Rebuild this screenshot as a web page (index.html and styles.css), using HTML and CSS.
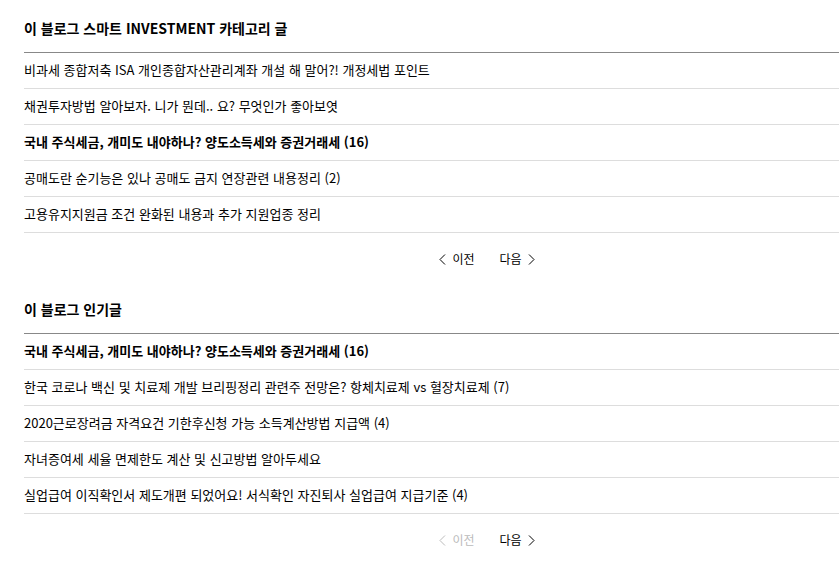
FILE: index.html
```html
<!DOCTYPE html>
<html lang="ko">
<head>
<meta charset="utf-8">
<title>블로그 글 목록</title>
<link rel="stylesheet" href="styles.css">
</head>
<body>
<div class="page">
  <section class="section">
    <h2 class="heading">이 블로그 스마트 INVESTMENT 카테고리 글</h2>
    <ul class="list">
      <li class="item">비과세 종합저축 ISA 개인종합자산관리계좌 개설 해 말어?! 개정세법 포인트</li>
      <li class="item">채권투자방법 알아보자. 니가 뭔데.. 요? 무엇인가 좋아보엿</li>
      <li class="item current">국내 주식세금, 개미도 내야하나? 양도소득세와 증권거래세 (16)</li>
      <li class="item">공매도란 순기능은 있나 공매도 금지 연장관련 내용정리 (2)</li>
      <li class="item">고용유지지원금 조건 완화된 내용과 추가 지원업종 정리</li>
    </ul>
    <div class="pager">
      <span class="pg prev"><svg class="chev" width="7" height="11" viewBox="0 0 7 11"><polyline points="6,0.5 1,5.5 6,10.5" fill="none" stroke="currentColor" stroke-width="1"/></svg>이전</span>
      <span class="pg next">다음<svg class="chev" width="7" height="11" viewBox="0 0 7 11"><polyline points="1,0.5 6,5.5 1,10.5" fill="none" stroke="currentColor" stroke-width="1"/></svg></span>
    </div>
  </section>
  <section class="section">
    <h2 class="heading">이 블로그 인기글</h2>
    <ul class="list">
      <li class="item current">국내 주식세금, 개미도 내야하나? 양도소득세와 증권거래세 (16)</li>
      <li class="item">한국 코로나 백신 및 치료제 개발 브리핑정리 관련주 전망은? 항체치료제 vs 혈장치료제 (7)</li>
      <li class="item">2020근로장려금 자격요건 기한후신청 가능 소득계산방법 지급액 (4)</li>
      <li class="item">자녀증여세 세율 면제한도 계산 및 신고방법 알아두세요</li>
      <li class="item">실업급여 이직확인서 제도개편 되었어요! 서식확인 자진퇴사 실업급여 지급기준 (4)</li>
    </ul>
    <div class="pager">
      <span class="pg prev disabled"><svg class="chev" width="7" height="11" viewBox="0 0 7 11"><polyline points="6,0.5 1,5.5 6,10.5" fill="none" stroke="currentColor" stroke-width="1"/></svg>이전</span>
      <span class="pg next">다음<svg class="chev" width="7" height="11" viewBox="0 0 7 11"><polyline points="1,0.5 6,5.5 1,10.5" fill="none" stroke="currentColor" stroke-width="1"/></svg></span>
    </div>
  </section>
</div>
</body>
</html>
```

FILE: styles.css
```css
html, body {
  margin: 0;
  padding: 0;
  background: #fff;
  overflow: hidden;
}
body {
  font-family: "Noto Sans CJK KR", "Noto Sans", sans-serif;
  color: #000;
  font-size: 12px;
}
.page {
  width: 926px;
  padding-left: 24px;
}
.heading {
  margin: 0;
  padding: 19px 0 15px;
  line-height: 18px;
  font-size: 14px;
  font-weight: bold;
  border-bottom: 1px solid #888;
}
.list {
  list-style: none;
  margin: 0;
  padding: 0;
}
.item {
  height: 33px;
  line-height: 33px;
  padding-bottom: 2px;
  font-size: 13px;
  border-bottom: 1px solid #ddd;
  white-space: nowrap;
  overflow: hidden;
}
.item.current {
  font-weight: bold;
}
.pager {
  display: flex;
  justify-content: center;
  gap: 25px;
  padding: 17px 0 13px;
  line-height: 18px;
}
.pg {
  display: flex;
  align-items: center;
  gap: 6px;
}
.pg.disabled {
  color: #bbb;
}
.chev {
  display: block;
}
```
